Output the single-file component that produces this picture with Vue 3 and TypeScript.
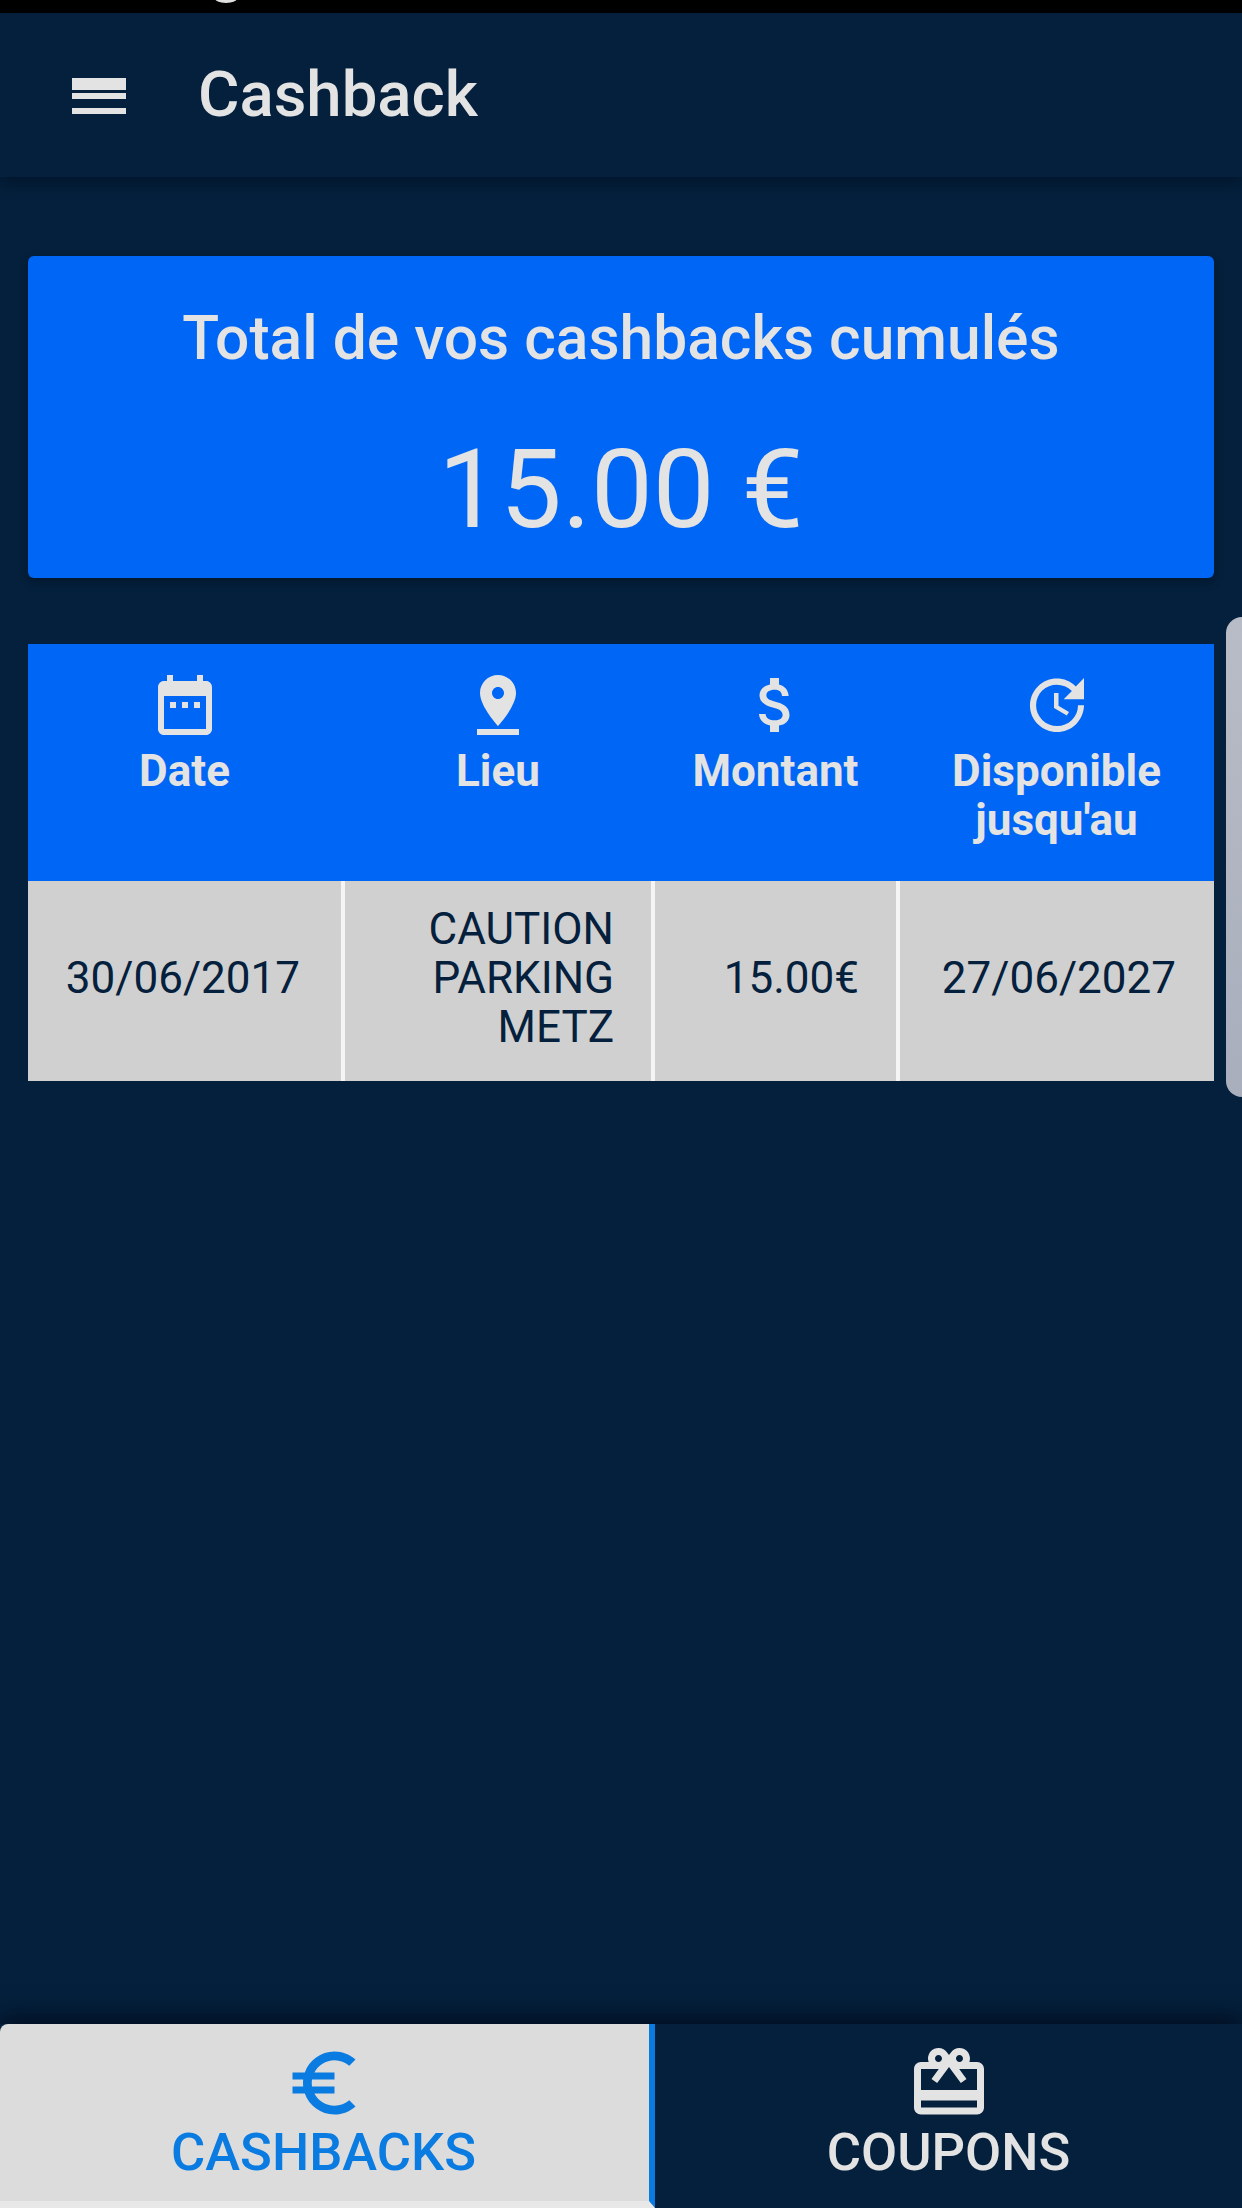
<script setup lang="ts">
import { ref } from 'vue'

type Column = { label: string[]; icon: string }

const columns: Column[] = [
  {
    label: ['Date'],
    icon: 'M9 11H7v2h2v-2zm4 0h-2v2h2v-2zm4 0h-2v2h2v-2zm2-7h-1V2h-2v2H8V2H6v2H5c-1.11 0-1.99.9-1.99 2L3 20c0 1.1.89 2 2 2h14c1.1 0 2-.9 2-2V6c0-1.1-.9-2-2-2zm0 16H5V9h14v11z',
  },
  {
    label: ['Lieu'],
    icon: 'M18 8c0-3.31-2.69-6-6-6S6 4.69 6 8c0 4.5 6 11 6 11s6-6.5 6-11zm-8 0c0-1.1.9-2 2-2s2 .9 2 2-.89 2-2 2c-1.1 0-2-.9-2-2zM5 20v2h14v-2H5z',
  },
  {
    label: ['Montant'],
    icon: 'M11.8 10.9c-2.27-.59-3-1.2-3-2.15 0-1.09 1.01-1.85 2.7-1.85 1.78 0 2.44.85 2.5 2.1h2.21c-.07-1.72-1.12-3.3-3.21-3.81V3h-3v2.16c-1.94.42-3.5 1.68-3.5 3.61 0 2.31 1.91 3.46 4.7 4.13 2.5.6 3 1.48 3 2.41 0 .69-.49 1.79-2.7 1.79-2.06 0-2.87-.92-2.98-2.1h-2.2c.12 2.19 1.76 3.42 3.68 3.83V21h3v-2.15c1.95-.37 3.5-1.5 3.5-3.55 0-2.84-2.43-3.81-4.7-4.4z',
  },
  {
    label: ['Disponible', "jusqu'au"],
    icon: 'M21 10.12h-6.78l2.74-2.82c-2.73-2.7-7.15-2.8-9.88-.1-2.73 2.71-2.73 7.08 0 9.79s7.15 2.71 9.88 0C18.32 15.65 19 14.08 19 12.1h2c0 1.98-.88 4.55-2.64 6.29-3.51 3.48-9.21 3.48-12.72 0-3.5-3.47-3.53-9.11-.02-12.58s9.14-3.47 12.65 0L21 3v7.12zM12.5 8v4.25l3.5 2.08-.72 1.21L11 13V8h1.5z',
  },
]

const rows = [
  { date: '30/06/2017', place: ['CAUTION', 'PARKING', 'METZ'], amount: '15.00€', until: '27/06/2027' },
]

const tabs = [
  {
    id: 'cashbacks',
    label: 'CASHBACKS',
    icon: 'M15 18.5c-2.51 0-4.68-1.42-5.76-3.5H15v-2H8.58c-.05-.33-.08-.66-.08-1s.03-.67.08-1H15V9H9.24C10.32 6.92 12.5 5.5 15 5.5c1.61 0 3.09.59 4.23 1.57L21 5.3C19.41 3.87 17.3 3 15 3c-3.92 0-7.24 2.51-8.48 6H3v2h3.06c-.04.33-.06.66-.06 1s.02.67.06 1H3v2h3.52c1.24 3.49 4.56 6 8.48 6 2.31 0 4.41-.87 6-2.3l-1.78-1.77c-1.13.98-2.6 1.57-4.22 1.57z',
  },
  {
    id: 'coupons',
    label: 'COUPONS',
    icon: 'M20 6h-2.18c.11-.31.18-.65.18-1 0-1.66-1.34-3-3-3-1.05 0-1.96.54-2.5 1.35l-.5.67-.5-.68C10.96 2.54 10.05 2 9 2 7.34 2 6 3.34 6 5c0 .35.07.69.18 1H4c-1.11 0-1.99.89-1.99 2L2 19c0 1.11.89 2 2 2h16c1.11 0 2-.89 2-2V8c0-1.11-.89-2-2-2zm-5-2c.55 0 1 .45 1 1s-.45 1-1 1-1-.45-1-1 .45-1 1-1zM9 4c.55 0 1 .45 1 1s-.45 1-1 1-1-.45-1-1 .45-1 1-1zm11 15H4v-2h16v2zm0-5H4V8h5.08L7 10.83 8.62 12 11 8.76l1-1.36 1 1.36L15.38 12 17 10.83 14.92 8H20v6z',
  },
]

const activeTab = ref('cashbacks')
</script>

<template>
  <div class="page">
    <div class="status-bar"><span class="status-dot"></span></div>

    <header class="app-bar">
      <svg class="menu-icon" viewBox="0 0 24 24" fill="currentColor"><path d="M3 18h18v-2H3v2zm0-5h18v-2H3v2zm0-5v2h18V6H3z" /></svg>
      <h1>Cashback</h1>
    </header>

    <main class="content">
      <section class="total-card">
        <h2>Total de vos cashbacks cumulés</h2>
        <p class="total-amount">15.00 €</p>
      </section>

      <section class="history">
        <div class="history-head">
          <div v-for="col in columns" :key="col.label[0]" class="head-cell">
            <svg class="head-icon" viewBox="0 0 24 24" fill="currentColor"><path :d="col.icon" /></svg>
            <span v-for="line in col.label" :key="line">{{ line }}</span>
          </div>
        </div>
        <div v-for="row in rows" :key="row.date" class="history-row">
          <div class="cell cell-date">{{ row.date }}</div>
          <div class="cell">
            <span v-for="line in row.place" :key="line">{{ line }}</span>
          </div>
          <div class="cell">{{ row.amount }}</div>
          <div class="cell">{{ row.until }}</div>
        </div>
      </section>
    </main>

    <nav class="tabs">
      <button
        v-for="tab in tabs"
        :key="tab.id"
        class="tab"
        :class="{ active: activeTab === tab.id }"
        @click="activeTab = tab.id"
      >
        <svg class="tab-icon" viewBox="0 0 24 24" fill="currentColor"><path :d="tab.icon" /></svg>
        <span>{{ tab.label }}</span>
      </button>
    </nav>

    <div class="edge-handle"></div>
  </div>
</template>

<style>
html, body {
  margin: 0;
  background: #04203c;
}
</style>

<style scoped>
.page {
  position: relative;
  display: flex;
  flex-direction: column;
  width: 1242px;
  height: 2208px;
  overflow: hidden;
  background: #04203c;
  color: #e3e3e3;
  font-family: Roboto, "Liberation Sans", sans-serif;
}

.status-bar {
  position: relative;
  flex: none;
  height: 13px;
  background: #000;
}

.status-dot {
  position: absolute;
  left: 214px;
  top: -9px;
  width: 24px;
  height: 12px;
  border-radius: 50%;
  background: #e0e0e0;
}

.app-bar {
  position: relative;
  z-index: 1;
  flex: none;
  display: flex;
  align-items: center;
  gap: 63px;
  height: 164px;
  padding: 0 0 0 63px;
  box-shadow: 0 6px 14px rgba(0, 8, 24, 0.45);
  background: #04203c;
}

.menu-icon {
  width: 72px;
  height: 72px;
  margin-top: 2px;
}

.app-bar h1 {
  margin: 0;
  font-size: 63.5px;
  font-weight: 500;
  line-height: 72px;
}

.content {
  flex: 1;
  display: flex;
  flex-direction: column;
  gap: 66px;
  padding: 79px 28px 0;
}

.total-card {
  display: flex;
  flex-direction: column;
  align-items: center;
  height: 322px;
  box-sizing: border-box;
  padding-top: 47px;
  border-radius: 6px;
  background: #0066f5;
  box-shadow: 0 4px 8px rgba(0, 8, 24, 0.35);
}

.total-card h2 {
  margin: 0;
  font-size: 60.5px;
  font-weight: 500;
  line-height: 72px;
}

.total-amount {
  margin: 53px 0 0;
  font-size: 110px;
  font-weight: 400;
  line-height: 124px;
}

.history-head,
.history-row {
  display: grid;
  grid-template-columns: 317px 310px 245px 314px;
}

.history-head {
  height: 237px;
  background: #0066f5;
}

.head-cell {
  display: flex;
  flex-direction: column;
  align-items: center;
  padding: 25px 4px 0 0;
  font-size: 44px;
  font-weight: 700;
  line-height: 49px;
}

.head-cell:last-child {
  padding-right: 1px;
}

.head-icon {
  width: 72px;
  height: 72px;
  margin-bottom: 6px;
}

.history-row {
  height: 200px;
  background: #d0d0d0;
  color: #04203c;
  font-size: 44px;
  line-height: 49px;
}

.cell {
  display: flex;
  flex-direction: column;
  align-items: flex-end;
  justify-content: center;
  padding: 0 37px 6px 0;
  border-right: 4px solid #f5f5f5;
}

.cell:last-child {
  padding-right: 38px;
  border-right: 0;
}

.cell-date {
  padding-right: 41px;
}

.tabs {
  position: relative;
  flex: none;
  display: grid;
  grid-template-columns: 655px 587px;
  height: 184px;
  box-shadow: 0 -6px 22px rgba(0, 6, 20, 0.75);
  background: #04203c;
}

.tab {
  display: flex;
  flex-direction: column;
  align-items: center;
  box-sizing: border-box;
  padding: 17px 0 0;
  border: 0;
  background: transparent;
  color: #e3e3e3;
  font: inherit;
  font-size: 52.5px;
  font-weight: 500;
  line-height: 56px;
}

.tab.active {
  padding-right: 2px;
  border-right: 6px solid #0a7be0;
  border-bottom: 7px solid #e8e8e8;
  border-top-left-radius: 8px;
  background: #dcdcdc;
  color: #0a7be0;
}

.tab-icon {
  width: 84px;
  height: 84px;
  margin-bottom: -1px;
}

.edge-handle {
  position: absolute;
  top: 617px;
  right: 0;
  width: 16px;
  height: 480px;
  border-radius: 16px 0 0 16px;
  background: linear-gradient(#b8bcc6, #a8aebc);
}
</style>
